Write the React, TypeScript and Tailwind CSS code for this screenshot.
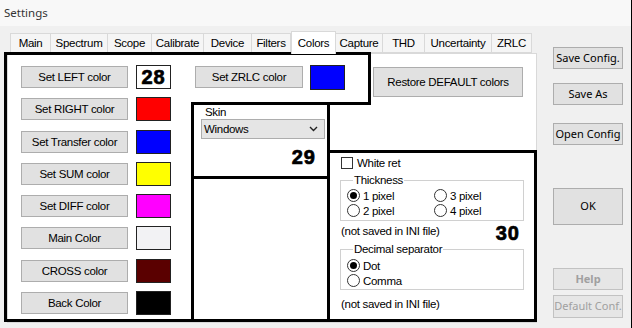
import React from "react";

// --- Windows-ish look ---
const SYS = "font-['Liberation_Sans',Arial,sans-serif] tracking-[-0.3px]";
const UI = "font-['Noto_Sans','Open_Sans',sans-serif] tracking-normal";
const BTN = "flex items-center justify-center bg-[#e1e1e1] border border-[#adadad] text-black";

const TABS = [
  { label: "Main", w: "w-[41px]" },
  { label: "Spectrum", w: "w-[57px]" },
  { label: "Scope", w: "w-[44px]" },
  { label: "Calibrate", w: "w-[52px]" },
  { label: "Device", w: "w-[48px]" },
  { label: "Filters", w: "w-[39px]" },
  { label: "Colors", w: "w-[45px]", active: true },
  { label: "Capture", w: "w-[47px]" },
  { label: "THD", w: "w-[42px]" },
  { label: "Uncertainty", w: "w-[67px]" },
  { label: "ZRLC", w: "w-[40px]" },
];

const COLOR_ROWS = [
  { label: "Set LEFT color", swatch: "bg-white", badge: "28" },
  { label: "Set RIGHT color", swatch: "bg-[#ff0000]" },
  { label: "Set Transfer color", swatch: "bg-[#0000ff]" },
  { label: "Set SUM color", swatch: "bg-[#ffff00]" },
  { label: "Set DIFF color", swatch: "bg-[#ff00ff]" },
  { label: "Main Color", swatch: "bg-[#f2f2f4]" },
  { label: "CROSS color", swatch: "bg-[#5a0000]" },
  { label: "Back Color", swatch: "bg-black" },
];

const BIG = "font-['Liberation_Sans',Arial,sans-serif] font-bold text-[20px] leading-[20px] tracking-[1px] [-webkit-text-stroke:0.7px_black]";

function Radio({ checked, label }: { checked?: boolean; label: string }) {
  return (
    <div className="flex items-center h-[15px]">
      <span className="w-[13px] h-[13px] rounded-full border border-[#333] bg-white flex items-center justify-center">
        {checked && <span className="w-[7px] h-[7px] rounded-full bg-black" />}
      </span>
      <span className="ml-[3px] leading-[14px]">{label}</span>
    </div>
  );
}

export default function App() {
  return (
    <div className={`relative w-[632px] h-[328px] overflow-hidden bg-[#f0f0f0] border-r border-black ${SYS} text-[11.5px] text-black`}>
      {/* title bar */}
      <div className={`h-[26px] bg-[#f8f8f8] pl-[4px] pt-[4px] text-[11.5px] text-[#333] ${UI}`}>Settings</div>

      <div className="flex">
        {/* tabs + panel */}
        <div className="ml-[7px] w-[530px] flex flex-col">
          <div className="flex pl-[3px] pt-[7px] h-[27px] items-end">
            {TABS.map((t) =>
              t.active ? (
                <div
                  key={t.label}
                  className={`${t.w} h-[23px] -mb-[1px] z-10 bg-white border border-b-0 border-[#d9d9d9] flex items-center justify-center leading-[14px]`}
                >
                  {t.label}
                </div>
              ) : (
                <div
                  key={t.label}
                  className={`${t.w} h-[20px] bg-[#f5f5f5] border border-l-0 first:border-l border-[#d9d9d9] flex items-center justify-center leading-[14px]`}
                >
                  {t.label}
                </div>
              )
            )}
          </div>

          <div className="h-[270px] bg-white border border-[#d9d9d9] flex pl-[13px] pt-[11px]">
            {/* color buttons */}
            <div className="w-[150px] flex flex-col gap-[8.3px]">
              {COLOR_ROWS.map((r) => (
                <div key={r.label} className="flex items-center h-[24px]">
                  <div className={`${BTN} w-[107px] h-[22px] leading-[14px]`}>{r.label}</div>
                  <div className={`ml-[8px] w-[35px] h-[24px] border border-[#222] ${r.swatch} flex items-center justify-center`}>
                    {r.badge && <span className={BIG}>{r.badge}</span>}
                  </div>
                </div>
              ))}
            </div>

            <div className="ml-[24px] flex flex-col">
              <div className="flex items-start h-[32px]">
                <div className={`${BTN} mt-[1px] w-[108px] h-[22px] leading-[14px]`}>Set ZRLC color</div>
                <div className="ml-[7px] w-[35px] h-[25px] border border-[#222] bg-[#0000ff]" />
                <div className={`${BTN} ml-[28px] mt-[2px] w-[150px] h-[30px] leading-[14px]`}>Restore DEFAULT colors</div>
              </div>

              <div className="flex items-start">
                {/* skin */}
                <div className="ml-[6px] w-[124px] flex flex-col">
                  <div className="ml-[4px] mt-[8px] leading-[14px]">Skin</div>
                  <div className="h-[20px] bg-[#e5e5e5] border border-[#adadad] flex items-center justify-between pl-[2px] pr-[6px] leading-[14px]">
                    <span>Windows</span>
                    <svg width="9" height="6" viewBox="0 0 9 6">
                      <path d="M1 1 L4.5 4.5 L8 1" fill="none" stroke="#222" strokeWidth="1.4" />
                    </svg>
                  </div>
                  <div className={`mt-[8px] self-end pr-[9px] ${BIG}`}>29</div>
                </div>

                {/* misc settings */}
                <div className="ml-[15px] mt-[59px] w-[184px] flex flex-col">
                  <div className="flex items-center h-[14px] pl-[1px]">
                    <span className="w-[12px] h-[12px] border border-[#333] bg-white" />
                    <span className="ml-[4px] leading-[14px]">White ret</span>
                  </div>

                  <fieldset className="mt-[4px] border border-[#d0d0d0] pl-[6px] pb-[2px]">
                    <legend className="ml-[6px] px-[1px] leading-[13px]">Thickness</legend>
                    <div className="grid grid-cols-[87px_1fr] pt-[1px]">
                      <Radio checked label="1 pixel" />
                      <Radio label="3 pixel" />
                      <Radio label="2 pixel" />
                      <Radio label="4 pixel" />
                    </div>
                  </fieldset>

                  <div className="flex justify-between items-start h-[22px] pl-[1px]">
                    <span className="mt-[3px] leading-[14px]">(not saved in INI file)</span>
                    <span className={`mt-[2px] mr-[4px] ${BIG}`}>30</span>
                  </div>

                  <fieldset className="border border-[#d0d0d0] pl-[6px] pb-[1px]">
                    <legend className="ml-[6px] px-[1px] leading-[13px]">Decimal separator</legend>
                    <div className="flex flex-col pt-[2px]">
                      <Radio checked label="Dot" />
                      <Radio label="Comma" />
                    </div>
                  </fieldset>

                  <div className="mt-[7px] pl-[1px] leading-[14px]">(not saved in INI file)</div>
                </div>
              </div>
            </div>
          </div>
        </div>

        {/* right buttons */}
        <div className={`ml-[16px] w-[70px] flex flex-col ${UI} text-[11px]`}>
          <div className={`${BTN} mt-[21px] h-[22px]`}>Save Config.</div>
          <div className={`${BTN} mt-[14px] h-[22px]`}>Save As</div>
          <div className={`${BTN} mt-[18px] h-[22px]`}>Open Config</div>
          <div className={`${BTN} mt-[43px] h-[37px] bg-[#dcdcdc]`}>OK</div>
          <div className="mt-[43px] h-[22px] flex items-center justify-center bg-[#e6e6e6] border border-[#c2c2c2] text-[#a0a0a0] font-bold">Help</div>
          <div className="mt-[5px] h-[23px] flex items-center justify-center bg-[#e6e6e6] border border-[#c2c2c2] text-[#a0a0a0]">Default Conf.</div>
        </div>
      </div>

      {/* annotation outlines */}
      <div className="absolute left-[4px] top-[52px] w-[367px] h-[3px] bg-black" />
      <div className="absolute left-[4px] top-[52px] w-[3px] h-[270px] bg-black" />
      <div className="absolute left-[368px] top-[52px] w-[3px] h-[53px] bg-black" />
      <div className="absolute left-[191px] top-[102px] w-[180px] h-[3px] bg-black" />
      <div className="absolute left-[191px] top-[102px] w-[3px] h-[220px] bg-black" />
      <div className="absolute left-[4px] top-[319px] w-[190px] h-[3px] bg-black" />
      <div className="absolute left-[327px] top-[102px] w-[3px] h-[220px] bg-black" />
      <div className="absolute left-[191px] top-[176px] w-[139px] h-[3px] bg-black" />
      <div className="absolute left-[191px] top-[319px] w-[346px] h-[3px] bg-black" />
      <div className="absolute left-[327px] top-[150px] w-[210px] h-[3px] bg-black" />
      <div className="absolute left-[534px] top-[150px] w-[3px] h-[172px] bg-black" />
    </div>
  );
}
